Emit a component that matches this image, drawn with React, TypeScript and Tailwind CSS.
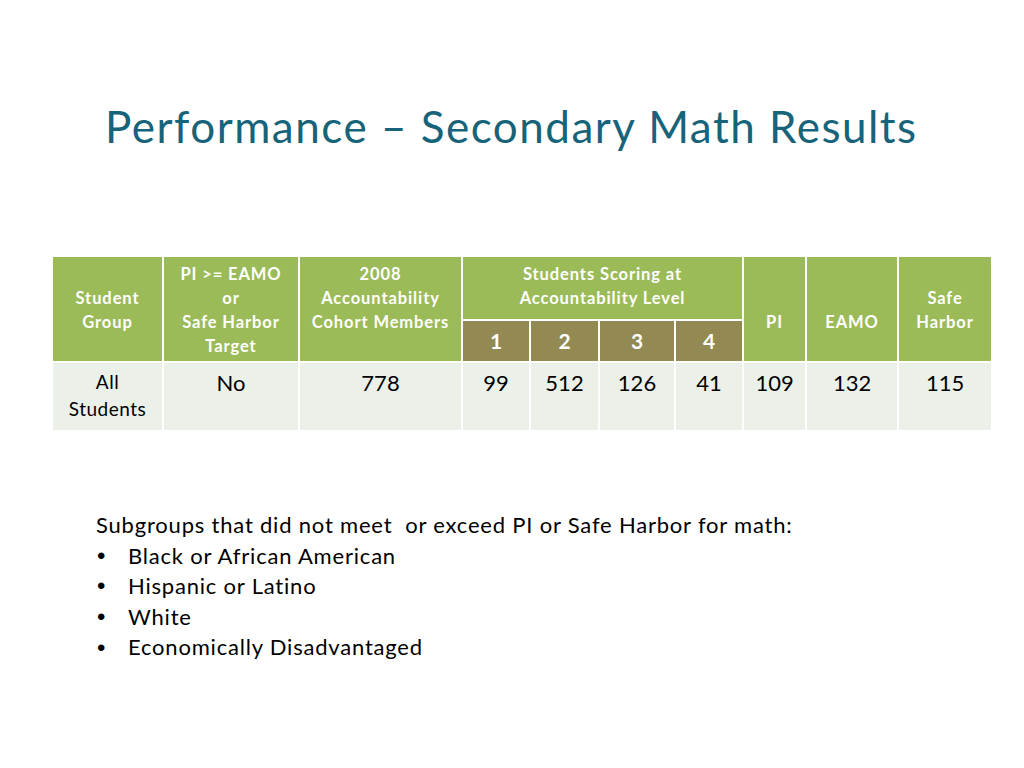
export default function App() {
  const th = "border-2 border-white bg-[#9bbb59] text-white font-bold text-[16.5px] tracking-[0.9px] leading-[24px] text-center align-top";
  const lv = "border-2 border-white bg-[#938953] text-white font-bold text-[21px] leading-[24px] text-center align-middle";
  const td = "border-2 border-white bg-[#ebf1e8] text-black text-[22px] leading-[27px] text-center align-top pt-[6px]";
  return (
    <div className="w-[1024px] h-[768px] bg-white font-['Lato',sans-serif] relative overflow-hidden">
      <h1 className="pt-[98px] pl-[105px] text-[44px] leading-[56px] tracking-[1.5px] text-[#17647a]">
        Performance – Secondary Math Results
      </h1>
      <table className="ml-[51px] mt-[101px] border-collapse table-fixed w-[940px]">
        <colgroup>
          <col className="w-[111px]" />
          <col className="w-[136px]" />
          <col className="w-[163px]" />
          <col className="w-[68px]" />
          <col className="w-[69px]" />
          <col className="w-[76px]" />
          <col className="w-[68px]" />
          <col className="w-[63px]" />
          <col className="w-[92px]" />
          <col className="w-[94px]" />
        </colgroup>
        <tbody>
          <tr className="h-[64px]">
            <th rowSpan={2} className={`${th} pt-[29px]`}>Student<br />Group</th>
            <th rowSpan={2} className={`${th} pt-[5px]`}>PI &gt;= EAMO<br />or<br />Safe Harbor<br />Target</th>
            <th rowSpan={2} className={`${th} pt-[5px]`}>2008<br />Accountability<br />Cohort Members</th>
            <th colSpan={4} className={`${th} pt-[5px]`}>Students Scoring at<br />Accountability Level</th>
            <th rowSpan={2} className={`${th} pt-[53px]`}>PI</th>
            <th rowSpan={2} className={`${th} pt-[53px]`}>EAMO</th>
            <th rowSpan={2} className={`${th} pt-[29px]`}>Safe<br />Harbor</th>
          </tr>
          <tr className="h-[42px]">
            <td className={lv}>1</td>
            <td className={lv}>2</td>
            <td className={lv}>3</td>
            <td className={lv}>4</td>
          </tr>
          <tr className="h-[69px]">
            <td className="border-2 border-white bg-[#ebf1e8] text-black text-[19px] tracking-[0.5px] leading-[27px] text-center align-top pt-[5px]">
              All<br />Students
            </td>
            <td className={td}>No</td>
            <td className={td}>778</td>
            <td className={td}>99</td>
            <td className={td}>512</td>
            <td className={td}>126</td>
            <td className={td}>41</td>
            <td className={td}>109</td>
            <td className={td}>132</td>
            <td className={td}>115</td>
          </tr>
        </tbody>
      </table>
      <div className="ml-[96px] mt-[78px] text-[22px] leading-[30.6px] tracking-[0.8px] text-black">
        <p>Subgroups that did not meet&nbsp; or exceed PI or Safe Harbor for math:</p>
        <ul>
          {["Black or African American", "Hispanic or Latino", "White", "Economically Disadvantaged"].map((t) => (
            <li key={t} className="flex items-center">
              <span className="w-[32px] pl-[1px] font-['Liberation_Sans',sans-serif] text-[24px] leading-[30px]">•</span>
              <span>{t}</span>
            </li>
          ))}
        </ul>
      </div>
    </div>
  );
}
